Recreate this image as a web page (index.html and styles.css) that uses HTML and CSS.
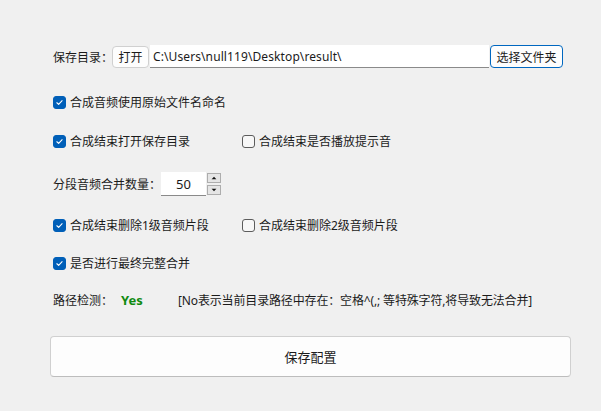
FILE: index.html
```html
<!DOCTYPE html>
<html lang="zh">
<head>
<meta charset="utf-8">
<link rel="stylesheet" href="styles.css">
</head>
<body>
<div class="panel">
  <div class="row dir-row">
    <span class="label">保存目录：</span>
    <button class="btn open-btn">打开</button>
    <div class="path-input">C:\Users\null119\Desktop\result\</div>
    <button class="btn pick-btn">选择文件夹</button>
  </div>

  <div class="row check-row r2">
    <label class="check"><span class="box on"><svg viewBox="0 0 13 13"><path d="M3.4 6.8 L5.5 8.8 L9.6 4.4" fill="none" stroke="#fff" stroke-width="1.3" stroke-linecap="round" stroke-linejoin="round"/></svg></span>合成音频使用原始文件名命名</label>
  </div>

  <div class="row check-row r3">
    <label class="check col1"><span class="box on"><svg viewBox="0 0 13 13"><path d="M3.4 6.8 L5.5 8.8 L9.6 4.4" fill="none" stroke="#fff" stroke-width="1.3" stroke-linecap="round" stroke-linejoin="round"/></svg></span>合成结束打开保存目录</label>
    <label class="check"><span class="box"></span>合成结束是否播放提示音</label>
  </div>

  <div class="row spin-row">
    <span class="label">分段音频合并数量：</span>
    <div class="spin-input">50</div>
    <div class="spin-btns">
      <span class="sb up"><svg viewBox="0 0 14 10"><path d="M4 6.5 L7 3.5 L10 6.5 Z" fill="#111"/></svg></span>
      <span class="sb down"><svg viewBox="0 0 14 10"><path d="M4 3.5 L10 3.5 L7 6.5 Z" fill="#111"/></svg></span>
    </div>
  </div>

  <div class="row check-row r5">
    <label class="check col1"><span class="box on"><svg viewBox="0 0 13 13"><path d="M3.4 6.8 L5.5 8.8 L9.6 4.4" fill="none" stroke="#fff" stroke-width="1.3" stroke-linecap="round" stroke-linejoin="round"/></svg></span>合成结束删除1级音频片段</label>
    <label class="check"><span class="box"></span>合成结束删除2级音频片段</label>
  </div>

  <div class="row check-row r6">
    <label class="check"><span class="box on"><svg viewBox="0 0 13 13"><path d="M3.4 6.8 L5.5 8.8 L9.6 4.4" fill="none" stroke="#fff" stroke-width="1.3" stroke-linecap="round" stroke-linejoin="round"/></svg></span>是否进行最终完整合并</label>
  </div>

  <div class="row path-row">
    <span class="label">路径检测：</span>
    <span class="yes">Yes</span>
    <span class="hint">[No表示当前目录路径中存在：空格^(,; 等特殊字符,将导致无法合并]</span>
  </div>

  <button class="save-btn">保存配置</button>
</div>
</body>
</html>
```

FILE: styles.css
```css
html, body {
  margin: 0;
  padding: 0;
  background: #f0f0f0;
}
body {
  width: 601px;
  height: 411px;
  overflow: hidden;
  font-family: "Noto Sans", "Noto Sans CJK SC", sans-serif;
  font-size: 12px;
  color: #1b1b1b;
}
.panel {
  display: flex;
  flex-direction: column;
  padding: 45px 30px 0 50px;
}
.row {
  display: flex;
  align-items: center;
  padding-left: 3px;
}
.label {
  white-space: nowrap;
}
.dir-row {
  height: 23px;
}
.dir-row .label {
  width: 59px;
}
.btn {
  font-family: inherit;
  font-size: 12px;
  color: #1b1b1b;
  background: #fdfdfd;
  border: 1px solid #d0d0d0;
  border-radius: 4px;
  padding: 0;
  height: 22px;
  box-sizing: border-box;
}
.open-btn {
  width: 37px;
}
.path-input {
  width: 339px;
  height: 23px;
  box-sizing: border-box;
  background: #fff;
  border-bottom: 1px solid #8a8a8a;
  margin-left: 1px;
  padding-left: 3px;
  display: flex;
  align-items: center;
  white-space: nowrap;
  letter-spacing: 0.1px;
}
.pick-btn {
  width: 73px;
  height: 23px;
  margin-left: 1px;
  border: 1px solid #0067c0;
  background: #fdfdfd;
}
.check-row {
  height: 16px;
}
.r2 { margin-top: 26px; }
.r3 { margin-top: 23px; }
.r5 { margin-top: 21px; }
.r6 { margin-top: 22px; }
.check {
  display: flex;
  align-items: center;
  white-space: nowrap;
}
.col1 {
  width: 189px;
}
.box {
  width: 11px;
  height: 11px;
  border: 1px solid #5c5c5c;
  border-radius: 3px;
  background: #f7f7f7;
  margin-right: 4px;
  display: inline-flex;
  flex: none;
}
.box.on {
  background: #005fb8;
  border-color: #005fb8;
}
.box svg {
  width: 11px;
  height: 11px;
}
.spin-row {
  height: 24px;
  margin-top: 23px;
}
.spin-row .label {
  width: 108px;
}
.spin-input {
  width: 45px;
  height: 24px;
  box-sizing: border-box;
  background: #fff;
  border-bottom: 1px solid #8a8a8a;
  display: flex;
  align-items: center;
  justify-content: center;
  font-size: 13px;
}
.spin-btns {
  display: flex;
  flex-direction: column;
  gap: 2px;
  margin-left: 1px;
  align-self: flex-start;
  margin-top: 1px;
}
.sb {
  width: 14px;
  height: 10px;
  box-sizing: border-box;
  border: 1px solid #adadad;
  background: #e5e5e5;
  display: flex;
}
.sb svg {
  width: 12px;
  height: 8px;
}
.path-row {
  height: 16px;
  margin-top: 21px;
}
.path-row .label {
  width: 68px;
}
.yes {
  color: #108a10;
  font-weight: bold;
  font-size: 13px;
  width: 57px;
}
.hint {
  white-space: nowrap;
  letter-spacing: -0.15px;
}
.save-btn {
  margin-top: 28px;
  width: 521px;
  height: 41px;
  box-sizing: border-box;
  background: #fdfdfd;
  border: 1px solid #d0d0d0;
  border-bottom-color: #bdbdbd;
  border-radius: 4px;
  font-family: inherit;
  font-size: 13px;
  color: #1b1b1b;
  padding: 0;
}
```
